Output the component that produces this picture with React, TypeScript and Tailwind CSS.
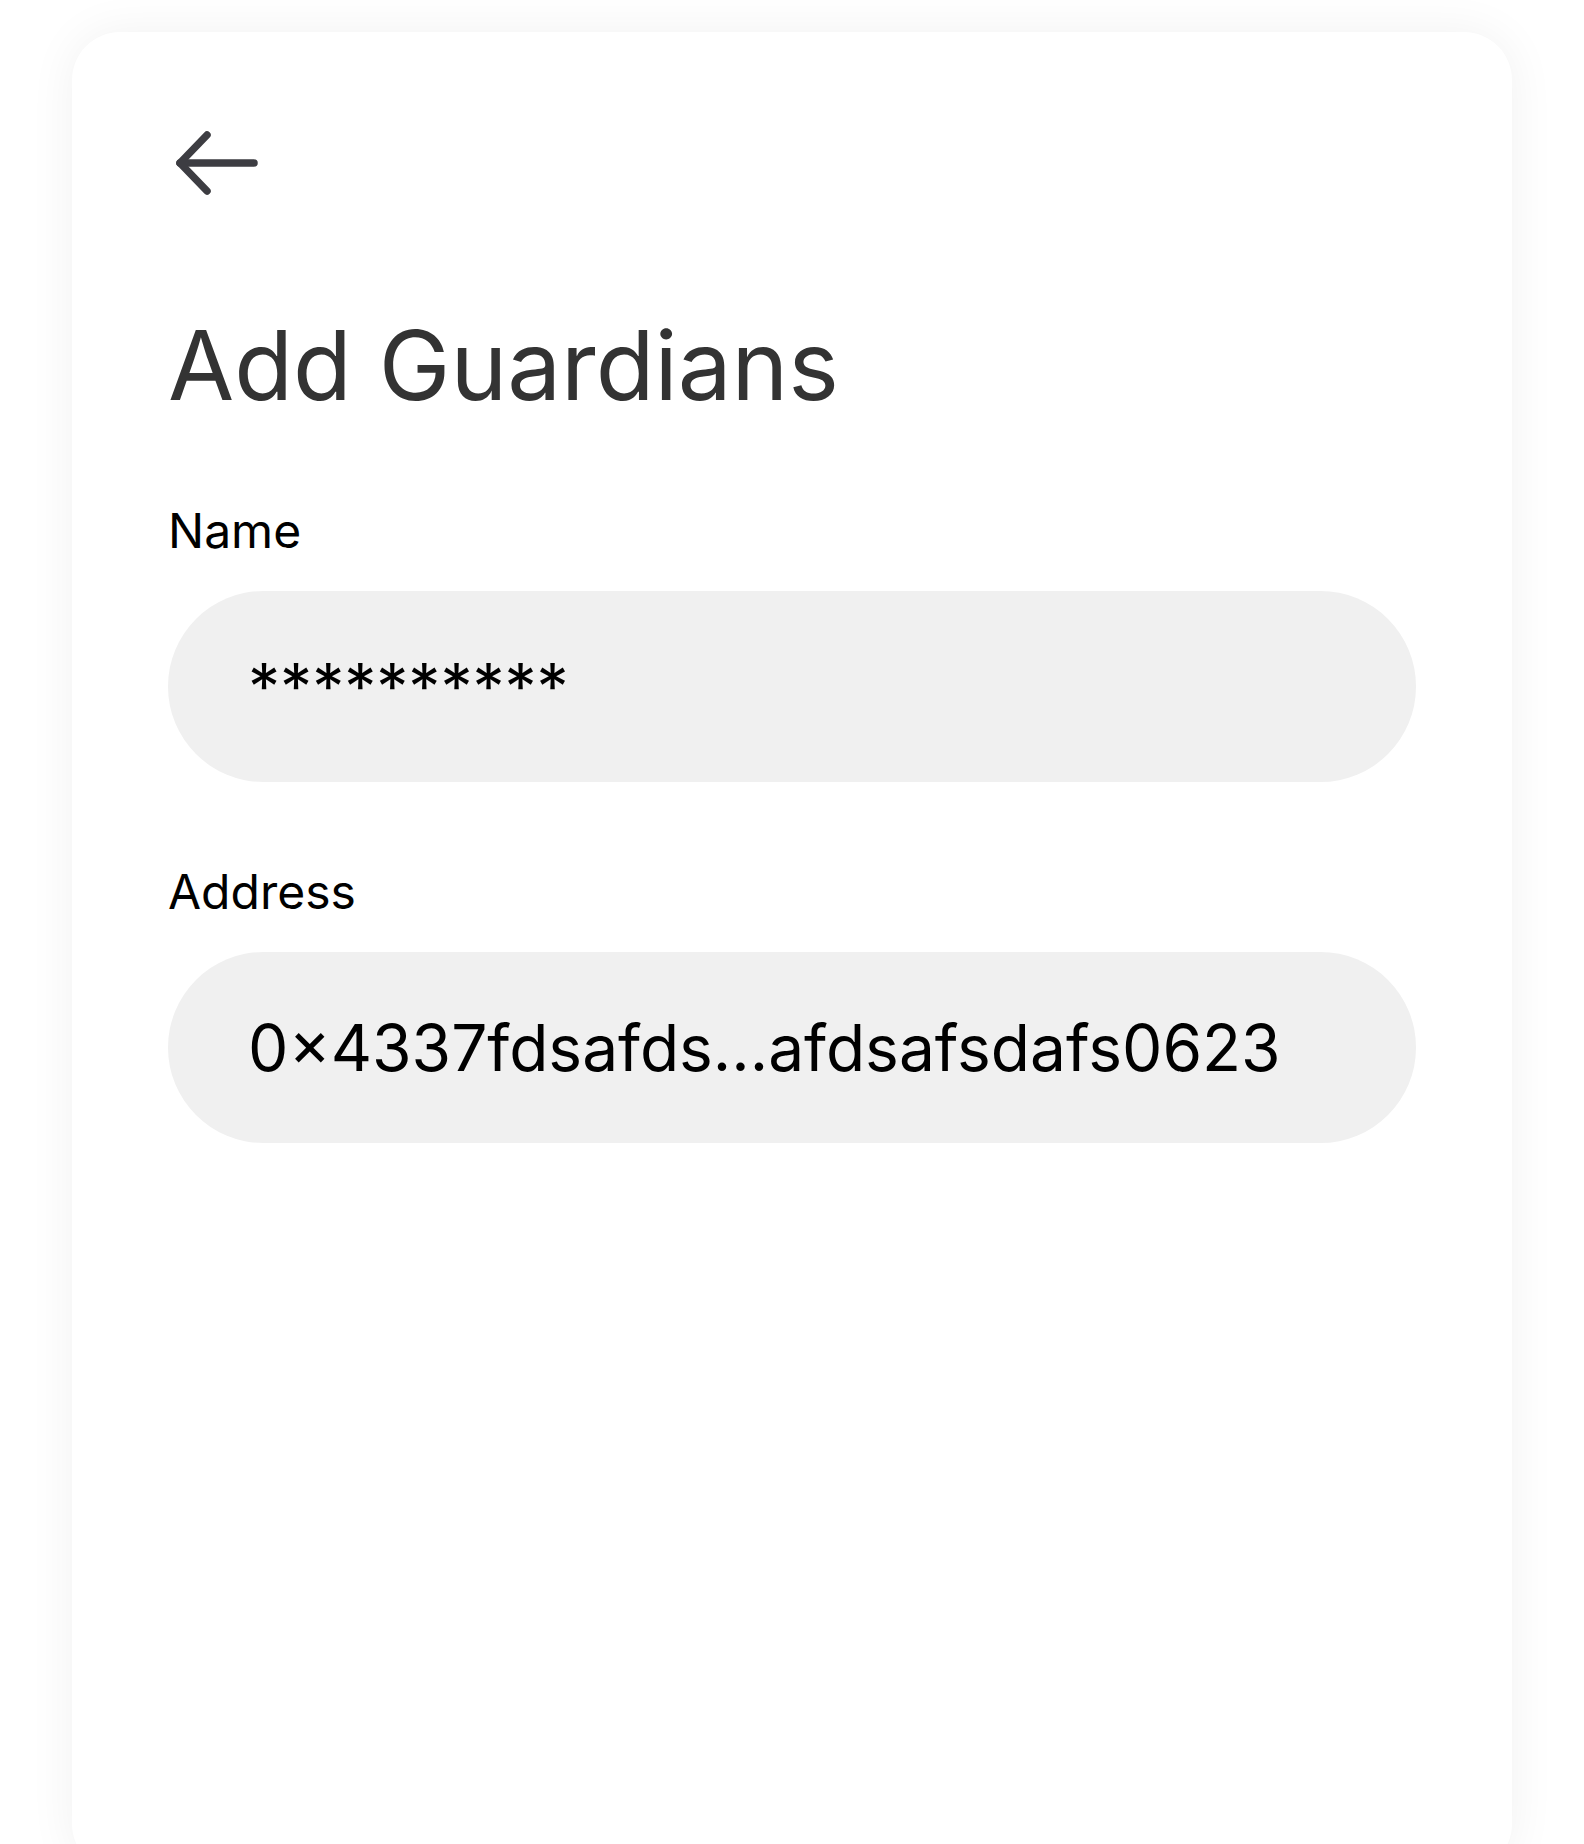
import React from 'react';

const BackArrow: React.FC = () => (
  <svg
    width="90"
    height="72"
    viewBox="0 0 90 72"
    fill="none"
    stroke="#3d3d42"
    strokeWidth="7.5"
    strokeLinecap="round"
    strokeLinejoin="round"
    className="block"
  >
    <path d="M84 36H10" />
    <path d="M37 8L10 36L37 64" />
  </svg>
);

interface FieldProps {
  label: string;
  value: string;
  className?: string;
}

const Field: React.FC<FieldProps> = ({ label, value, className = '' }) => (
  <div className={className}>
    <label className="block text-[48px] leading-none text-black">{label}</label>
    <div className="mt-[36px] flex h-[191px] items-center rounded-full bg-[#f0f0f0] pl-[80px]">
      <span className="text-[64px] leading-none text-black">{value}</span>
    </div>
  </div>
);

export default function App() {
  return (
    <div
      className="min-h-[1844px] bg-white px-[72px] pt-[32px]"
      style={{ fontFamily: 'Inter, "Noto Sans", sans-serif' }}
    >
      <div className="min-h-[1840px] rounded-[48px] bg-white px-[96px] pt-[95px] shadow-[0_0_48px_rgba(0,0,0,0.06)]">
        <button type="button" className="ml-[2px] block" aria-label="Back">
          <BackArrow />
        </button>

        <h1 className="mt-[118px] text-[96px] font-normal leading-none text-[#333333]">
          Add Guardians
        </h1>

        <Field label="Name" value="**********" className="mt-[94px]" />
        <Field label="Address" value="0×4337fdsafds...afdsafsdafs0623" className="mt-[86px]" />
      </div>
    </div>
  );
}
